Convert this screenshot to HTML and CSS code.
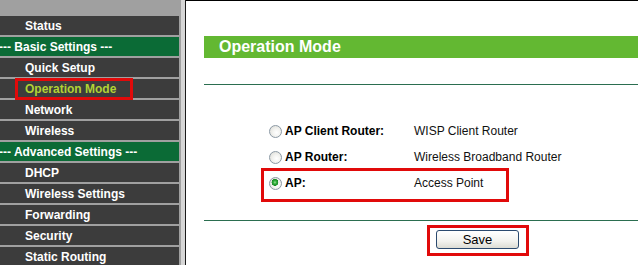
FILE: index.html
```html
<!DOCTYPE html>
<html lang="en">
<head>
    <meta charset="UTF-8">
    <title>Operation Mode</title>
    <link rel="stylesheet" href="styles.css">
</head>
<body>
    <div class="menu">
        <a class="item">Status</a>
        <a class="group">--- Basic Settings ---</a>
        <a class="item">Quick Setup</a>
        <a class="item active"><span class="mark mark-menu"></span>Operation Mode</a>
        <a class="item">Network</a>
        <a class="item">Wireless</a>
        <a class="group">--- Advanced Settings ---</a>
        <a class="item">DHCP</a>
        <a class="item">Wireless Settings</a>
        <a class="item">Forwarding</a>
        <a class="item">Security</a>
        <a class="item">Static Routing</a>
    </div>
    <div class="frame-edge"></div>

    <div class="main">
        <div class="title">Operation Mode</div>
        <div class="rule rule-top"></div>

        <form class="options">
            <label class="option">
                <span class="radio"></span>
                <span class="name">AP Client Router:</span>
                <span class="desc">WISP Client Router</span>
            </label>
            <label class="option">
                <span class="radio"></span>
                <span class="name">AP Router:</span>
                <span class="desc">Wireless Broadband Router</span>
            </label>
            <label class="option">
                <span class="mark mark-option"></span>
                <span class="radio checked"></span>
                <span class="name">AP:</span>
                <span class="desc">Access Point</span>
            </label>
        </form>

        <div class="rule rule-bottom"></div>

        <div class="actions">
            <span class="save-wrap">
                <span class="mark mark-save"></span>
                <button type="button" class="save">Save</button>
            </span>
        </div>
    </div>
</body>
</html>
```

FILE: styles.css
```css
/* router web ui - operation mode page */
body {
    margin: 0;
    height: 265px;
    overflow: hidden;
    display: flex;
    background-color: #fff;
    font-family: "Liberation Sans", Arial, sans-serif;
    font-size: 12px;
    color: #000;
}

/* left menu frame */
.menu {
    width: 179px;
    flex-shrink: 0;
    padding-top: 16px;
    background-color: #a0a0a0;
    display: flex;
    flex-direction: column;
}

.menu a {
    position: relative;
    display: block;
    height: 19px;
    line-height: 19px;
    padding-top: 1px;
    box-sizing: border-box;
    margin-bottom: 2px;
    color: #fff;
    font-weight: bold;
    white-space: nowrap;
}

.item {
    background-color: #3c3c3c;
    padding-left: 25px;
}

.item.active {
    color: #b2d234;
}

.group {
    background-color: #0b6b36;
    padding-left: 0;
    text-indent: -1px;
}

.frame-edge {
    width: 4px;
    flex-shrink: 0;
    background-color: #d6d6d6;
    border-left: 2px solid #a0a0a0;
    border-right: 1px solid #1a1a1a;
}

/* right content frame */
.main {
    flex: 1;
    border-top: 1px solid #000;
    padding-left: 18px;
    display: flex;
    flex-direction: column;
}

.title {
    margin-top: 35px;
    height: 22px;
    line-height: 22px;
    padding-left: 15px;
    background-color: #63b832;
    color: #fff;
    font-size: 16px;
    font-weight: bold;
}

.rule {
    height: 0;
    border-top: 1px solid #2b6e50;
}

.rule-top {
    margin-top: 26px;
}

.options {
    margin: 33px 0 0;
}

.option {
    position: relative;
    display: flex;
    align-items: center;
    height: 26px;
}

.radio {
    width: 11px;
    height: 11px;
    margin-left: 65px;
    margin-right: 3px;
    border: 1px solid #8c99a5;
    border-radius: 50%;
    background: radial-gradient(circle at 60% 60%, #fff 0, #f3f3f0 40%, #d8d8d2 100%);
    flex-shrink: 0;
}

.radio.checked {
    background:
        radial-gradient(circle at 45% 40%, #9ee29a 0, #2fae3a 1.6px, #1a8a26 3.2px, transparent 3.6px),
        radial-gradient(circle at 60% 60%, #fff 0, #f3f3f0 40%, #d8d8d2 100%);
}

.name {
    width: 129px;
    font-weight: bold;
}

.desc {
    color: #111;
}

.rule-bottom {
    margin-top: 24px;
}

.actions {
    margin-top: 9px;
    padding-left: 232px;
}

.save-wrap {
    position: relative;
    display: inline-block;
}

.save {
    display: block;
    width: 83px;
    height: 19px;
    padding: 0;
    border: 1px solid #2b4a6f;
    border-radius: 3px;
    background: linear-gradient(#ffffff, #f2f2ee 60%, #dcdcd4);
    font-family: "Liberation Sans", Arial, sans-serif;
    font-size: 13px;
    color: #000;
}

/* red annotation boxes drawn over the page */
.mark {
    position: absolute;
    border: 3px solid #e10a0a;
    box-sizing: border-box;
    pointer-events: none;
}

.mark-menu {
    left: 15px;
    top: -1px;
    width: 118px;
    height: 22px;
    z-index: 1;
}

.mark-option {
    left: 57px;
    top: -2px;
    width: 248px;
    height: 34px;
}

.mark-save {
    left: -9px;
    top: -5px;
    width: 102px;
    height: 31px;
}
```
